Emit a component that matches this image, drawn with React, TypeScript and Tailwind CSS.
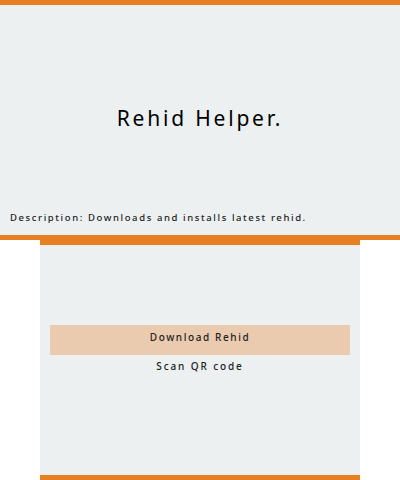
import React from 'react'

const font = { fontFamily: '"Noto Sans", "DejaVu Sans", sans-serif' }

export default function App() {
  return (
    <div className="w-[400px] h-[480px] bg-white text-black" style={font}>
      <div className="h-[240px] flex flex-col bg-[#ecf0f1] border-t-[5px] border-b-[5px] border-[#e67e22]">
        <div className="flex-1 flex items-center justify-center pt-[19px]">
          <h1 className="text-[21px] leading-none font-normal tracking-[2.8px]">Rehid Helper.</h1>
        </div>
        <p className="px-[10px] pb-[13px] text-[9.5px] leading-none font-medium tracking-[1.6px] text-[#222]">
          Description: Downloads and installs latest rehid.
        </p>
      </div>
      <div className="mx-10 h-[240px] flex flex-col items-center bg-[#ecf0f1] border-t-[5px] border-b-[5px] border-[#e67e22] pt-[80px] px-[10px]">
        <button className="w-full h-[30px] bg-[#eacbb0] text-[10px] font-medium tracking-[1.6px] text-[#222] pb-[6px]">
          Download Rehid
        </button>
        <button className="mt-[3px] text-[10px] font-medium tracking-[1.9px] text-[#222] leading-[16px]">
          Scan QR code
        </button>
      </div>
    </div>
  )
}
